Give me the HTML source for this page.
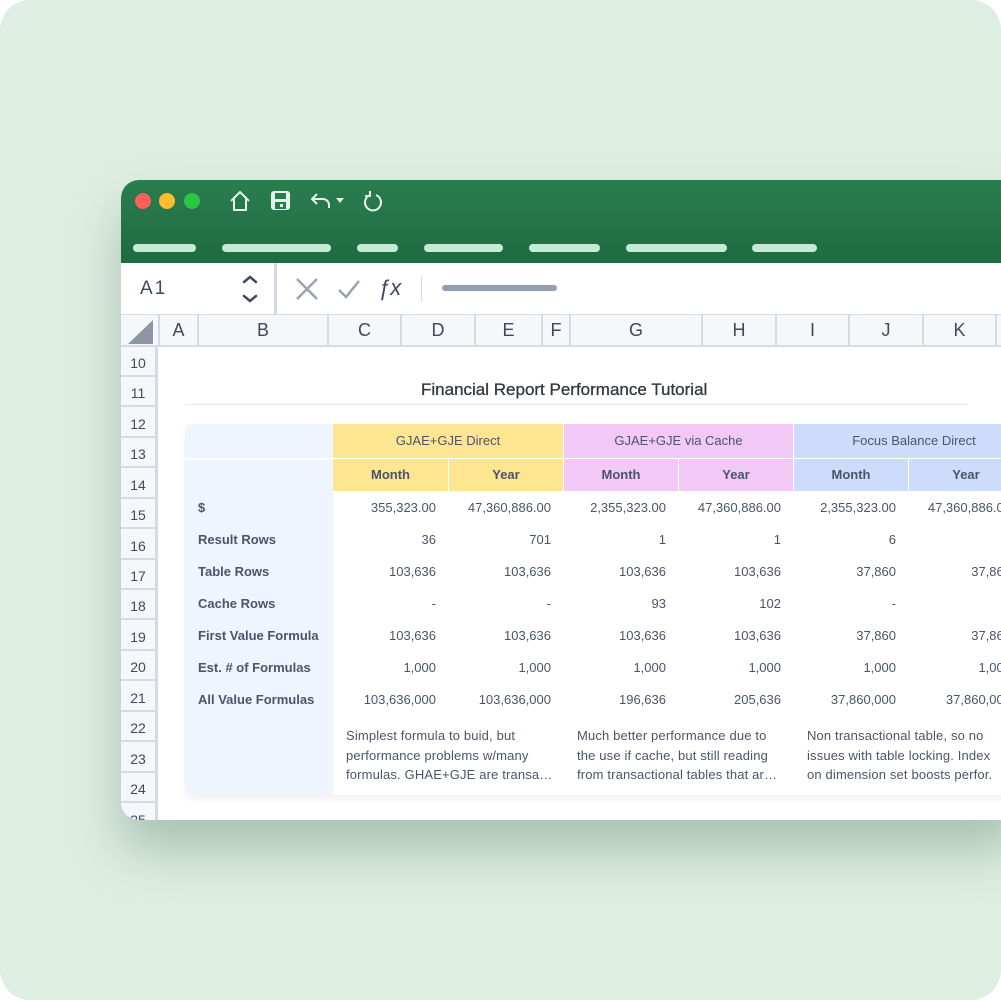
<!DOCTYPE html>
<html><head><meta charset="utf-8"><style>
*{margin:0;padding:0;box-sizing:border-box}
body{width:1001px;height:1000px;background:#fff;overflow:hidden;font-family:"Liberation Sans",sans-serif;position:relative}
.bg{position:absolute;left:0;top:0;width:1001px;height:1000px;background:#dfeee3;border-radius:30px}
.win{position:absolute;left:121px;top:180px;width:900px;height:640px;background:#fff;border-radius:18px 0 0 18px;overflow:hidden;box-shadow:0 30px 50px rgba(70,110,90,.35)}
.hdr{position:absolute;left:0;top:0;width:100%;height:83px;background:linear-gradient(#2a7d4f,#1f6b40)}
.dot{position:absolute;top:13px;width:16px;height:16px;border-radius:50%}
.pill{position:absolute;top:64px;height:8px;border-radius:4px;background:#c6ebd5}
.abs{position:absolute}
.fbar{position:absolute;top:83px;left:0;width:100%;height:52px;border-bottom:1px solid #d5dbe6;background:#fff}
.colh{position:absolute;top:135px;left:0;width:100%;height:32px;background:#f5f7fb;border-bottom:2px solid #d5dbe6}
.colh div{position:absolute;top:0;height:30px;line-height:31px;text-align:center;font-size:18px;color:#3e4a5c;border-left:2px solid #d5dbe6}
.rowh{position:absolute;left:0;width:37px;height:29px;background:#f5f7fb;border-bottom:2px solid #d5dbe6;border-right:3px solid #d5dbe6;text-align:center;line-height:30px;font-size:14px;color:#3e4a5c}
.t{position:absolute;font-size:13px;color:#4a5568;white-space:nowrap}
.gh{position:absolute;top:244px;height:34px;line-height:34px;text-align:center;font-size:13px;color:#4a5568}
.sh{position:absolute;top:279px;height:32px;line-height:32px;text-align:center;font-size:13px;color:#4a5568;font-weight:bold}
.lbl{position:absolute;left:77px;font-size:13px;font-weight:bold;color:#4a5568}
.num{position:absolute;font-size:13px;color:#4a5568;text-align:right;width:110px}
.desc{position:absolute;top:546px;font-size:13px;line-height:19.5px;color:#4a5568;white-space:nowrap;letter-spacing:0.15px}
</style></head><body>
<div class="bg"></div>
<div class="win">
  <div class="hdr">
    <div class="dot" style="left:14px;background:#fe5f57"></div>
    <div class="dot" style="left:38px;background:#febc2e"></div>
    <div class="dot" style="left:63px;background:#28c840"></div>
    <svg class="abs" style="left:108px;top:10px" width="22" height="22" viewBox="0 0 22 22" fill="none" stroke="#e6f3ea" stroke-width="2"><path d="M2 11 L11 2 L20 11 M5 9 V20 H17 V9"/></svg>
    <svg class="abs" style="left:149px;top:10px" width="21" height="21" viewBox="0 0 21 21"><rect x="1" y="1" width="19" height="19" rx="3" fill="#e6f3ea"/><rect x="5" y="3" width="11" height="6" fill="#2a7d4f"/><rect x="5" y="12" width="11" height="7" fill="#2a7d4f"/><rect x="10" y="14" width="3" height="3" fill="#e6f3ea"/></svg>
    <svg class="abs" style="left:189px;top:11px" width="36" height="20" viewBox="0 0 36 20" fill="none" stroke="#e6f3ea" stroke-width="2"><path d="M7 3 L2 8 L7 13 M2 8 H13 A6 6 0 0 1 19 14 V17"/><path d="M26 7 H34 L30 12 Z" fill="#e6f3ea" stroke="none"/></svg>
    <svg class="abs" style="left:241px;top:10px" width="22" height="22" viewBox="0 0 22 22" fill="none" stroke="#e6f3ea" stroke-width="2"><path d="M8 5 A8 8 0 1 0 14 5"/><path d="M8 1 V6 H3" /></svg>
    <div class="pill" style="left:12px;width:63px"></div>
    <div class="pill" style="left:101px;width:109px"></div>
    <div class="pill" style="left:236px;width:41px"></div>
    <div class="pill" style="left:303px;width:79px"></div>
    <div class="pill" style="left:408px;width:71px"></div>
    <div class="pill" style="left:505px;width:101px"></div>
    <div class="pill" style="left:631px;width:65px"></div>
  </div>
  <div class="fbar">
    <div class="t" style="left:19px;top:15px;font-size:19px;color:#3e4a5c;letter-spacing:2px">A1</div>
    <svg class="abs" style="left:120px;top:11px" width="18" height="30" viewBox="0 0 18 30" fill="none" stroke="#3e4a5c" stroke-width="2.5" stroke-linecap="round"><path d="M3 8 L9 3 L15 8 M3 22 L9 27 L15 22"/></svg>
    <div class="abs" style="left:153px;top:0;width:3px;height:52px;background:#d5dbe6"></div>
    <svg class="abs" style="left:174px;top:14px" width="24" height="24" viewBox="0 0 24 24" stroke="#9aa3b2" stroke-width="2.5"><path d="M2 2 L22 22 M22 2 L2 22"/></svg>
    <svg class="abs" style="left:216px;top:15px" width="24" height="22" viewBox="0 0 24 22" fill="none" stroke="#9aa3b2" stroke-width="2.5"><path d="M2 12 L9 19 L22 3"/></svg>
    <div class="t" style="left:257px;top:12px;font-size:22px;color:#3e4a5c;font-style:italic">ƒx</div>
    <div class="abs" style="left:300px;top:13px;width:1px;height:26px;background:#d5dbe6"></div>
    <div class="abs" style="left:321px;top:22px;width:115px;height:6px;border-radius:3px;background:#949eb0"></div>
  </div>
  <div class="colh">
    <svg class="abs" style="left:7px;top:5px" width="25" height="24"><path d="M25 0 V24 H0 Z" fill="#8e96a4"/></svg>
    <div style="left:37px;width:39px">A</div>
    <div style="left:76px;width:130px">B</div>
    <div style="left:206px;width:73px">C</div>
    <div style="left:279px;width:74px">D</div>
    <div style="left:353px;width:67px">E</div>
    <div style="left:420px;width:28px">F</div>
    <div style="left:448px;width:132px">G</div>
    <div style="left:580px;width:74px">H</div>
    <div style="left:654px;width:73px">I</div>
    <div style="left:727px;width:74px">J</div>
    <div style="left:801px;width:73px">K</div>
    <div style="left:874px;width:40px"></div>
  </div>
  <div class="abs" style="left:0;top:167px;width:37px;height:480px;background:#f5f7fb;border-right:3px solid #d5dbe6"></div>
  <div class="rowh" style="top:168px">10</div>
  <div class="rowh" style="top:198px">11</div>
  <div class="rowh" style="top:229px">12</div>
  <div class="rowh" style="top:259px">13</div>
  <div class="rowh" style="top:290px">14</div>
  <div class="rowh" style="top:320px">15</div>
  <div class="rowh" style="top:351px">16</div>
  <div class="rowh" style="top:381px">17</div>
  <div class="rowh" style="top:411px">18</div>
  <div class="rowh" style="top:442px">19</div>
  <div class="rowh" style="top:472px">20</div>
  <div class="rowh" style="top:503px">21</div>
  <div class="rowh" style="top:533px">22</div>
  <div class="rowh" style="top:564px">23</div>
  <div class="rowh" style="top:594px">24</div>
  <div class="rowh" style="top:625px">25</div>

  <div class="t" style="left:300px;top:200px;font-size:17px;color:#33383f;-webkit-text-stroke:0.3px #33383f">Financial Report Performance Tutorial</div>
  <div class="abs" style="left:64px;top:224px;width:783px;height:1px;background:#e2e6ec"></div>

  <div class="abs" style="left:64px;top:244px;width:860px;height:371px;background:#fff;border-radius:8px 0 0 8px;box-shadow:0 4px 10px rgba(0,0,0,.06)"></div>
  <div class="abs" style="left:64px;top:244px;width:148px;height:371px;background:#eef5fe;border-radius:8px 0 0 8px"></div>
  <div class="abs" style="left:64px;top:278px;width:148px;height:2px;background:#fff"></div>
  <div class="gh" style="left:212px;width:230px;background:#fde592">GJAE+GJE Direct</div>
  <div class="gh" style="left:443px;width:229px;background:#f2c9f6">GJAE+GJE via Cache</div>
  <div class="gh" style="left:673px;width:240px;background:#cddcfa">Focus Balance Direct</div>
  <div class="sh" style="left:212px;width:115px;background:#fde592">Month</div>
  <div class="sh" style="left:328px;width:114px;background:#fde592">Year</div>
  <div class="sh" style="left:443px;width:114px;background:#f2c9f6">Month</div>
  <div class="sh" style="left:558px;width:114px;background:#f2c9f6">Year</div>
  <div class="sh" style="left:673px;width:114px;background:#cddcfa">Month</div>
  <div class="sh" style="left:788px;width:114px;background:#cddcfa">Year</div>

  <div class="lbl" style="top:320px">$</div>
  <div class="lbl" style="top:352px">Result Rows</div>
  <div class="lbl" style="top:384px">Table Rows</div>
  <div class="lbl" style="top:416px">Cache Rows</div>
  <div class="lbl" style="top:448px">First Value Formula</div>
  <div class="lbl" style="top:480px">Est. # of Formulas</div>
  <div class="lbl" style="top:512px">All Value Formulas</div>

  <div class="num" style="left:205px;top:320px">355,323.00</div>
  <div class="num" style="left:320px;top:320px">47,360,886.00</div>
  <div class="num" style="left:435px;top:320px">2,355,323.00</div>
  <div class="num" style="left:550px;top:320px">47,360,886.00</div>
  <div class="num" style="left:665px;top:320px">2,355,323.00</div>
  <div class="num" style="left:780px;top:320px">47,360,886.00</div>

  <div class="num" style="left:205px;top:352px">36</div>
  <div class="num" style="left:320px;top:352px">701</div>
  <div class="num" style="left:435px;top:352px">1</div>
  <div class="num" style="left:550px;top:352px">1</div>
  <div class="num" style="left:665px;top:352px">6</div>
  <div class="num" style="left:780px;top:352px">3</div>

  <div class="num" style="left:205px;top:384px">103,636</div>
  <div class="num" style="left:320px;top:384px">103,636</div>
  <div class="num" style="left:435px;top:384px">103,636</div>
  <div class="num" style="left:550px;top:384px">103,636</div>
  <div class="num" style="left:665px;top:384px">37,860</div>
  <div class="num" style="left:780px;top:384px">37,860</div>

  <div class="num" style="left:205px;top:416px">-</div>
  <div class="num" style="left:320px;top:416px">-</div>
  <div class="num" style="left:435px;top:416px">93</div>
  <div class="num" style="left:550px;top:416px">102</div>
  <div class="num" style="left:665px;top:416px">-</div>
  <div class="num" style="left:780px;top:416px">-</div>

  <div class="num" style="left:205px;top:448px">103,636</div>
  <div class="num" style="left:320px;top:448px">103,636</div>
  <div class="num" style="left:435px;top:448px">103,636</div>
  <div class="num" style="left:550px;top:448px">103,636</div>
  <div class="num" style="left:665px;top:448px">37,860</div>
  <div class="num" style="left:780px;top:448px">37,860</div>

  <div class="num" style="left:205px;top:480px">1,000</div>
  <div class="num" style="left:320px;top:480px">1,000</div>
  <div class="num" style="left:435px;top:480px">1,000</div>
  <div class="num" style="left:550px;top:480px">1,000</div>
  <div class="num" style="left:665px;top:480px">1,000</div>
  <div class="num" style="left:780px;top:480px">1,000</div>

  <div class="num" style="left:205px;top:512px">103,636,000</div>
  <div class="num" style="left:320px;top:512px">103,636,000</div>
  <div class="num" style="left:435px;top:512px">196,636</div>
  <div class="num" style="left:550px;top:512px">205,636</div>
  <div class="num" style="left:665px;top:512px">37,860,000</div>
  <div class="num" style="left:780px;top:512px">37,860,000</div>

  <div class="desc" style="left:225px">Simplest formula to buid, but<br>performance problems w/many<br>formulas. GHAE+GJE are transa…</div>
  <div class="desc" style="left:456px">Much better performance due to<br>the use if cache, but still reading<br>from transactional tables that ar…</div>
  <div class="desc" style="left:686px">Non transactional table, so no<br>issues with table locking. Index<br>on dimension set boosts perfor.</div>
</div>
</body></html>
